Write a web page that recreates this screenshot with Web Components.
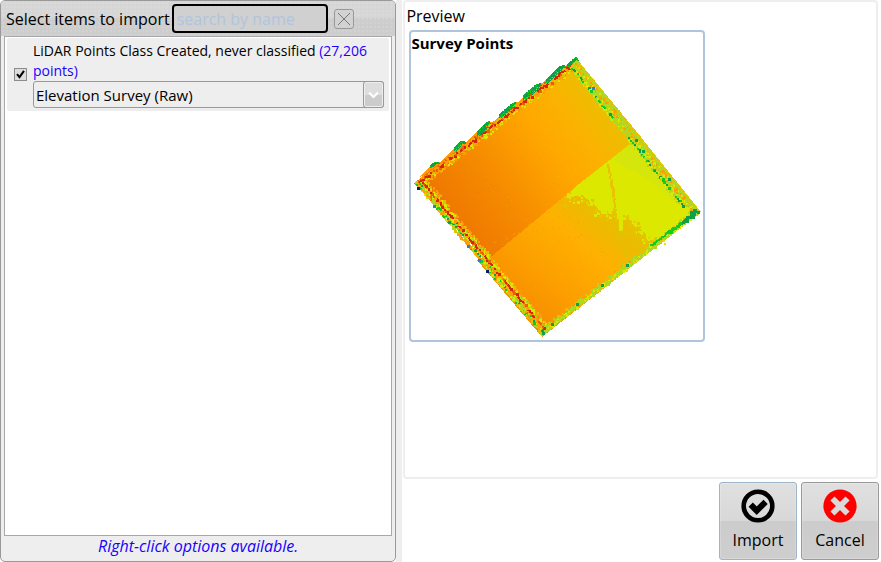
<!DOCTYPE html>
<html lang="en">
<head>
<meta charset="utf-8">
<title>Import items</title>
<style>
html, body { margin: 0; height: 100%; }
body { font: 15px/20px "Open Sans", "Noto Sans", sans-serif; color: #000; background: #fff; overflow: hidden; }
</style>
</head>
<body>
<import-dialog></import-dialog>
<script>
const define = (name, html, setup) => {
  const template = document.createElement('template');
  template.innerHTML = html;
  customElements.define(name, class extends HTMLElement {
    constructor() {
      super();
      this.attachShadow({ mode: 'open' }).append(template.content.cloneNode(true));
    }
    connectedCallback() { if (setup) setup(this.shadowRoot, this); }
  });
};

/* Elevation raster: smooth base shading with noisy cells along the borders. */
function drawSurvey(root) {
  const layer = root.querySelector('#cells');
  let seed = 7;
  const rnd = () => (seed = (seed * 16807) % 2147483647) / 2147483647;
  const cells = [];
  const cell = (x, y, c, s = 2) => {
    const d = `M${Math.round(x)} ${Math.round(y)}h${s}v${s}h-${s}z`;
    const last = cells[cells.length - 1];
    if (last && last[0] === c) last[1] += d; else cells.push([c, d]);
  };
  const pick = (list) => list[Math.floor(rnd() * list.length)];
  const G = '#10a048', g = '#14cc20', L = '#b0d820', Y = '#dce800', O = '#ff9c08', D = '#e86008', R = '#d42808', A = '#e0c008';
  /* lanes: [depth from the edge, colours, density] */
  const band = (ax, ay, bx, by, lanes) => {
    const len = Math.hypot(bx - ax, by - ay), ux = (bx - ax) / len, uy = (by - ay) / len;
    for (const [d, colours, density] of lanes)
      for (let t = d / 2; t < len - d / 2; t += 1.6)
        if (rnd() < density) {
          const k = d + rnd() * 1.4 - 0.7;
          cell(ax + ux * t - uy * k - 1, ay + uy * t + ux * k - 1, pick(colours), rnd() < .15 ? 3 : 2);
        }
  };
  band(415, 183, 577, 58, [
    [7, [Y, A, O, O], .4], [5.5, [O, A, Y, O], .8], [4, [O, A, D, Y, O], .9], [1, [O, A, D, O], .95], [2.6, [R, R, D, O, R], .85]
  ]);
  band(576, 58, 700, 212, [
    [11, [L, Y, A], .3], [10, [L, Y, L, Y], .7], [7.5, [Y, L, A, L], .85], [9, [L, g, Y, g, G], .65],
    [5.5, [L, O, Y, L, L], .9], [3.5, [L, L, O, Y], .9], [1.5, [L, L, L, A], .95]
  ]);
  band(700, 213, 542, 336, [
    [6, [A, L, O], .25], [4.5, [L, A, L], .75], [2.8, [L, Y, L], .95], [1.2, [L, L, Y, L], .95]
  ]);
  band(542, 336, 415, 184, [
    [11.5, [O, A, O], .4], [10, [Y, O, A, L], .75], [8.5, [O, Y, L, Y], .95], [5, [Y, L, O, A], .95], [6.8, [R, R, D, R, O], .85],
    [3.2, [L, O, Y, G, L, g, O], .95], [1.2, [O, L, L, Y, g, O, A], .95]
  ]);
  /* vegetation clumps protruding from the north-west edge */
  const strip = (x0, y0, x1, y1, w) => {
    const n = Math.hypot(x1 - x0, y1 - y0);
    for (let i = 0; i <= n; i++)
      for (let k = 0; k < w; k += 1) {
        cell(x0 + (x1 - x0) * i / n + k * .6, y0 + (y1 - y0) * i / n + k, rnd() < .8 ? G : g, 1);
        cell(x0 + (x1 - x0) * i / n, y0 + (y1 - y0) * i / n + k, rnd() < .8 ? G : g, 1);
      }
  };
  [[430, 165, 434, 162, 3], [434, 162, 438, 162, 2], [454, 147, 460, 141, 4], [460, 141, 464, 141, 3], [477, 131, 486, 122, 5], [486, 122, 489, 121, 3],
    [499, 114, 512, 103, 4], [512, 103, 515, 102, 2], [523, 95, 536, 84, 5], [536, 84, 540, 83, 3], [546, 79, 559, 66, 4], [559, 66, 564, 65, 3],
    [567, 64, 575, 57, 3], [575, 57, 577, 58, 3]].forEach(s => strip(...s));
  /* ridge between the ochre plain and the yellow slope */
  const edge = [[566, 198], [582, 195], [592, 203], [604, 215], [617, 209], [630, 220], [642, 230], [650, 241], [663, 236]];
  for (let i = 0; i < edge.length - 1; i++)
    for (let t = 0; t < 1; t += .055) {
      const x = edge[i][0] + (edge[i + 1][0] - edge[i][0]) * t, y = edge[i][1] + (edge[i + 1][1] - edge[i][1]) * t;
      const k = rnd() * 12 - 5;
      cell(x + rnd() * 8 - 4, y + k, k > 0 ? (rnd() < .5 ? '#dce800' : '#e4c404') : (rnd() < .8 ? '#dce800' : '#e4c404'), pick([2, 2, 3]));
    }
  for (let t = 0; t < 1; t += .03) {
    cell(607 + t * 8 + rnd() * 2, 164 + t * 56, '#e8c400', t > .3 && t < .55 ? 3 : 2);
    cell(615 + t * 4 + rnd() * 3, 204 + t * 24, '#dce800', 3);
    if (rnd() < .5) cell(617 + t * 8, 228 + t * 28, '#d8c400');
  }
  /* fine shimmer on the plain */
  for (let i = 0; i < 420; i++) {
    const a = rnd() * .8 + .1, b = rnd() * .8 + .1;
    const x = 415 + 161 * a + 127 * b, y = 183 - 125 * a + 153 * b;
    if (b < .47) cell(x, y, a < .3 ? '#f07c00' : a < .55 ? '#f89600' : '#ffb000', 1);
    else if (a < .5) cell(x, y, '#fba000', 1);
  }
  /* solid runs of vegetation in the east corner */
  for (let t = 0; t < 1; t += .03) cell(690 - t * 40, 213 + t * 31 + rnd() * 2, t < .25 ? G : g, t < .6 ? 3 : 2);
  [[690, 211], [692, 212], [691, 215], [693, 209], [685, 219]].forEach(p => cell(p[0], p[1], G, 4));
  [[576, 303], [601, 284], [626, 264], [551, 323], [542, 332], [697, 211], [635, 139], [448, 221], [642, 150], [668, 178]].forEach(p => cell(p[0], p[1], G, 3));
  [[417, 187], [486, 270]].forEach(p => cell(p[0], p[1], '#082060', 3));
  [[433, 205], [467, 245], [478, 259], [592, 87]].forEach(p => cell(p[0], p[1], '#2c80d0', 3));
  for (const [c, d] of cells) {
    const p = document.createElementNS('http://www.w3.org/2000/svg', 'path');
    p.setAttribute('fill', c);
    p.setAttribute('d', d);
    layer.append(p);
  }
}

define('survey-map', `
<style>
:host { display: block; }
svg { display: block; width: 292px; max-width: 100%; }
</style>
<svg viewBox="411 54 292 286" role="img" aria-label="Elevation map of survey points" shape-rendering="crispEdges">
  <defs>
    <linearGradient id="nw" gradientUnits="userSpaceOnUse" x1="455" y1="230" x2="625" y2="105">
      <stop offset="0" stop-color="#ee7600"/><stop offset=".3" stop-color="#f68c00"/><stop offset=".6" stop-color="#ffa800"/><stop offset=".75" stop-color="#fbb200"/><stop offset="1" stop-color="#e4c400"/>
    </linearGradient>
    <linearGradient id="se" gradientUnits="userSpaceOnUse" x1="520" y1="320" x2="625" y2="195">
      <stop offset="0" stop-color="#f68a00"/><stop offset=".3" stop-color="#fc9e00"/><stop offset=".6" stop-color="#ffb000"/><stop offset=".8" stop-color="#eabc00"/><stop offset="1" stop-color="#e2c800"/>
    </linearGradient>
  </defs>
  <path fill="#ff9c08" d="M420 177L433 163 440 162 460 142 467 142 486 122 493 122 512 103 519 102 536 84 543 83 559 66 566 66 576 57 580 64 450 165z"/>
  <path fill="url(#nw)" d="M414 183L576 58 641 137 488 262z"/>
  <path fill="url(#se)" d="M477 260L492 256 600 167 640 136 701 212 542 337z"/>
  <path fill="#dce800" d="M566 198L575 187 601 167 634 141 694 214 684 222 665 237 656 237 650 240 642 230 630 220 617 209 604 215 592 203 582 195z"/>
  <path fill="#d4e60c" d="M612 160L634 141 690 208 672 200 650 180z"/>
  <g id="cells"></g>
</svg>`, drawSurvey);

define('search-bar', `
<style>
:host { display: flex; align-items: center; gap: 2px; height: 35px; padding: 0 5px; box-sizing: border-box;
  background: radial-gradient(circle, #ffffff18 1px, transparent 1px) 0 0 / 4px 4px, linear-gradient(#d6d6d6 50%, #cdcdcd 50%); }
label { white-space: nowrap; font-size: 16px; }
input { width: 156px; height: 29px; box-sizing: border-box; border: 2px solid #000; border-radius: 4px; padding: 0 3px; font: inherit; font-size: 16px; background: #d0d0d0; outline: none; }
input::placeholder { color: #b0c4de; opacity: 1; }
button { margin-left: 4px; width: 20px; height: 20px; padding: 0; border: 1px solid #999; border-radius: 3px; background: #d2d2d2; display: grid; place-items: center; }
</style>
<label for="q">Select items to import</label>
<input id="q" type="text" placeholder="search by name">
<button type="button" aria-label="Clear search"><svg width="14" height="14" viewBox="0 0 14 14" fill="none" stroke="#777"><path d="M1 1l12 12M13 1L1 13"/></svg></button>`);

define('import-item', `
<style>
:host { display: grid; grid-template-columns: auto 1fr; align-items: center; column-gap: 6px; margin: 1px 2px 0; padding: 3px 5px 3px 7px; background: #eee; border-radius: 2px; }
input { appearance: none; width: 13px; height: 13px; margin: 0; border: 1px solid #8c8c8c; background: #ddd; }
input:checked { background: #ddd url("data:image/svg+xml,%3Csvg xmlns='http://www.w3.org/2000/svg' viewBox='0 0 11 11'%3E%3Cpath d='M2 5.2l2.5 3L9 1.8' fill='none' stroke='%23000' stroke-width='2'/%3E%3C/svg%3E") center / 11px no-repeat; }
label { display: block; font-size: 14px; }
.count { color: #1a00ff; }
.pick { position: relative; }
select { appearance: none; display: block; width: 100%; height: 27px; box-sizing: border-box; border: 1px solid #999; border-radius: 3px; padding: 0 22px 0 2px; font: inherit; color: #000; background: #eee; }
.arrow { position: absolute; right: 0; top: 0; bottom: 0; width: 21px; box-sizing: border-box; border: 1px solid #999; border-radius: 3px; background: linear-gradient(#ddd 50%, #ccc 50%); box-shadow: inset 0 0 0 1px #eee; display: grid; place-items: center; pointer-events: none; }
</style>
<input id="on" type="checkbox" checked>
<div>
  <label for="on"><slot></slot> <span class="count"><slot name="count"></slot> <slot name="unit"></slot></span></label>
  <div class="pick">
    <select aria-label="Import as"><option>Elevation Survey (Raw)</option></select>
    <span class="arrow"><svg width="11" height="8" viewBox="0 0 11 8" fill="none" stroke="#fff" stroke-width="2"><path d="M1 1.500l4.500 4.500L10 1.500"/></svg></span>
  </div>
</div>`);

define('items-panel', `
<style>
:host { display: flex; flex-direction: column; box-sizing: border-box; border: 1px solid #999; border-radius: 5px; background: #eee; overflow: hidden; min-width: 0; }
.list { flex: 1; margin: 0 3px; border: 1px solid #a8a8ac; background: #fff; }
p { margin: 0; height: 25px; line-height: 21px; font-size: 16px; text-align: center; font-style: italic; color: #1a00ff; }
</style>
<search-bar></search-bar>
<div class="list"><slot></slot></div>
<p>Right-click options available.</p>`);

define('preview-card', `
<style>
:host { display: block; width: fit-content; max-width: 100%; box-sizing: border-box; border: 2px solid #b0c4de; border-radius: 4px; }
h3 { margin: 0; height: 22px; line-height: 22px; font-size: 15px; font-weight: 700; }
</style>
<h3><slot></slot></h3>
<survey-map></survey-map>`);

define('preview-panel', `
<style>
:host { display: block; box-sizing: border-box; border: 2px solid #eee; border-radius: 4px; margin: 0 3px 0 1px; padding: 0 0 0 1px; }
h2 { margin: 0; padding-top: 2px; height: 26px; line-height: 24px; font-size: 16px; font-weight: 400; }
.body { padding-left: 3px; }
</style>
<h2>Preview</h2>
<div class="body"><slot></slot></div>`);

define('action-button', `
<style>
:host { display: block; }
button { display: flex; flex-direction: column; align-items: center; gap: 6px; width: 78px; height: 78px; box-sizing: border-box; padding: 6px 0 0; border: 1px solid #999; border-radius: 3px; background: linear-gradient(#e0e0e0, #d8d8d8 50%, #cccccc 50%, #cecece); font: inherit; font-size: 16px; line-height: 22px; color: #000; box-shadow: inset 0 0 0 1px #ffffff30; }
:host([primary]) button { border-color: #9db4c9; }
</style>
<button type="button"><slot name="icon"></slot><span><slot></slot></span></button>`);

define('import-dialog', `
<style>
:host { display: grid; grid-template-columns: 45% 6px 1fr; height: 100vh; }
.split { background: #eee; }
.right { display: flex; flex-direction: column; min-width: 0; }
preview-panel { flex: 1; min-height: 0; }
.actions { display: flex; justify-content: flex-end; gap: 4px; padding: 3px 2px 2px; }
svg { display: block; }
</style>
<items-panel><import-item>LiDAR Points Class Created, never classified<span slot="count">(27,206</span><span slot="unit">points)</span></import-item></items-panel>
<div class="split"></div>
<div class="right">
  <preview-panel><preview-card>Survey Points</preview-card></preview-panel>
  <div class="actions">
    <action-button primary>
      <svg slot="icon" width="34" height="34" viewBox="0 0 34 34"><circle cx="17" cy="17" r="14.300" fill="none" stroke="#000" stroke-width="4.600"/><path d="M9.700 15.700l6 6L24.600 12.800" fill="none" stroke="#000" stroke-width="6"/></svg>
      Import</action-button>
    <action-button>
      <svg slot="icon" width="34" height="34" viewBox="0 0 34 34"><circle cx="17" cy="17" r="16.600" fill="#f00"/><path d="M11.500 11.500l11 11M22.500 11.500l-11 11" stroke="#dadada" stroke-width="5.800" stroke-linecap="square"/></svg>
      Cancel</action-button>
  </div>
</div>`);
</script>
</body>
</html>
